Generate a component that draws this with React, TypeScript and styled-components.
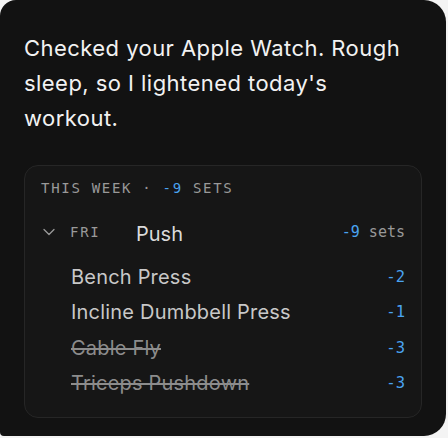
import styled, { createGlobalStyle } from 'styled-components';

const GlobalStyle = createGlobalStyle`
  html, body {
    margin: 0;
    padding: 0;
    background: #f4f4f4;
  }
`;

const SANS = `Inter, "Noto Sans", "Liberation Sans", sans-serif`;
const MONO = `"DejaVu Sans Mono", "Liberation Mono", monospace`;

const Bubble = styled.div`
  width: 446px;
  height: 436px;
  box-sizing: border-box;
  background: #121212;
  border-radius: 16px 22px 22px 4px;
  padding: 31px 24px 17px 24px;
  display: flex;
  flex-direction: column;
  gap: 29px;
`;

const Message = styled.p`
  margin: 0;
  max-width: 386px;
  font-family: ${SANS};
  font-size: 22px;
  letter-spacing: 0.45px;
  line-height: 35px;
  color: #f2f2f2;
`;

const Card = styled.div`
  background: #161616;
  border: 1px solid #262626;
  border-radius: 14px;
  padding: 11px 16px 16px 16px;
  display: flex;
  flex-direction: column;
`;

const Header = styled.div`
  font-family: ${MONO};
  font-size: 14px;
  letter-spacing: 1.7px;
  color: #999999;
  height: 22px;
  line-height: 22px;
`;

const Blue = styled.span`
  color: #4aa3f0;
`;

const DayRow = styled.div`
  display: flex;
  align-items: center;
  height: 46px;
  margin-top: 10px;
`;

const Chevron = styled.svg`
  width: 12px;
  height: 12px;
  margin-left: 2px;
  margin-right: 15px;
`;

const DayLabel = styled.span`
  font-family: ${MONO};
  font-size: 14px;
  letter-spacing: 1.7px;
  color: #999999;
  width: 66px;
`;

const WorkoutName = styled.span`
  font-family: ${SANS};
  font-size: 20px;
  color: #dadada;
  flex: 1;
  position: relative;
  top: 2px;
`;

const Total = styled.span`
  font-family: ${MONO};
  font-size: 15px;
  color: #999999;
`;

const List = styled.div`
  display: flex;
  flex-direction: column;
  padding-left: 30px;
  margin-top: 4px;
`;

const Exercise = styled.div`
  display: flex;
  align-items: center;
  justify-content: space-between;
  height: 35.5px;
`;

const ExerciseName = styled.span<{ $skipped?: boolean }>`
  font-family: ${SANS};
  font-size: 20px;
  letter-spacing: 0.2px;
  color: ${(p) => (p.$skipped ? '#8c8c8c' : '#c8c8c8')};
  text-decoration: ${(p) => (p.$skipped ? 'line-through' : 'none')};
  text-decoration-color: #8c8c8c;
`;

const Delta = styled.span`
  font-family: ${MONO};
  font-size: 15.5px;
  color: #4aa3f0;
`;

const exercises = [
  { name: 'Bench Press', delta: -2 },
  { name: 'Incline Dumbbell Press', delta: -1 },
  { name: 'Cable Fly', delta: -3, skipped: true },
  { name: 'Triceps Pushdown', delta: -3, skipped: true },
];

export default function App() {
  return (
    <>
      <GlobalStyle />
      <Bubble>
        <Message>
          Checked your Apple Watch. Rough sleep, so I lightened today's workout.
        </Message>
        <Card>
          <Header>
            THIS WEEK · <Blue>-9</Blue> SETS
          </Header>
          <DayRow>
            <Chevron viewBox="0 0 12 12" fill="none">
              <path d="M1 3.5 L6 8.5 L11 3.5" stroke="#999999" strokeWidth="1.3" strokeLinecap="round" strokeLinejoin="round" />
            </Chevron>
            <DayLabel>FRI</DayLabel>
            <WorkoutName>Push</WorkoutName>
            <Total>
              <Blue>-9</Blue> sets
            </Total>
          </DayRow>
          <List>
            {exercises.map((e) => (
              <Exercise key={e.name}>
                <ExerciseName $skipped={e.skipped}>{e.name}</ExerciseName>
                <Delta>{e.delta}</Delta>
              </Exercise>
            ))}
          </List>
        </Card>
      </Bubble>
    </>
  );
}
